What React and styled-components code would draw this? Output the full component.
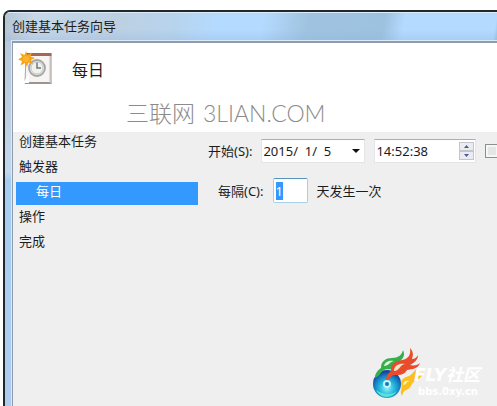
import React, { useEffect, useRef } from 'react';
import styled, { createGlobalStyle } from 'styled-components';

const GlobalStyle = createGlobalStyle`
  * {
    box-sizing: border-box;
  }

  body {
    margin: 0;
    background: #fff;
    color: #1c1c1c;
    font-family: 'Noto Sans', 'Noto Sans CJK SC', sans-serif;
    font-size: 13px;
    line-height: 18px;
    overflow: hidden;
  }
`;

const Page = styled.div`
  display: flex;
  min-height: 100vh;
  padding: 10px 0 0 3px;
`;

// The frame runs past the right and bottom edges
const Window = styled.main`
  flex: 1;
  min-width: 0;
  display: flex;
  flex-direction: column;
  border: solid #20282c;
  border-width: 2px 0 0 2px;
  border-top-left-radius: 7px;
  background: linear-gradient(180deg, #b3c6d8 0, #becfe0 100px, #c4d8ec 160px, #a5cdf2 168px, #b0cdf0 100%);
  overflow: hidden;
`;

const TitleBar = styled.header`
  height: 29px;
  padding: 4px 0 0 7px;
  border-top: 1px solid #dcebf7;
  background:
    linear-gradient(180deg, transparent 60%, rgba(140, 175, 220, 0.3)),
    linear-gradient(100deg, #b5c5d4 0, #c5d7e8 30px, #bdd0e2 110px, #b7d4ed 170px, #b4daff 210px, #b4daff 255px, #9fc3df 300px, #9dc2df 375px, #b4daff 395px, #b4daff 485px, #9dc2df 100%);
`;

const Title = styled.h1`
  margin: 0;
  font-size: 13px;
  font-weight: 400;
  line-height: 18px;
`;

const Client = styled.div`
  flex: 1;
  display: flex;
  flex-direction: column;
  margin-left: 7px;
  border: solid #8e9cae;
  border-width: 2px 0 0 1px;
  background: #efefef;
  box-shadow: 0 0 0 1px #dbe8f5;
`;

const Banner = styled.div`
  height: 89px;
  padding: 4px 0 0 5px;
  background: #fff;
`;

const BannerTop = styled.div`
  display: flex;
  align-items: center;
  gap: 19px;
  height: 42px;
`;

const Heading = styled.h2`
  margin: 0;
  padding-top: 3px;
  font-size: 16px;
  font-weight: 400;
  line-height: 24px;
`;

const Watermark = styled.div`
  display: flex;
  gap: 8px;
  padding: 6px 0 0 108px;
  color: #8b8b8b;
  font-family: Lato, 'Noto Sans CJK SC', sans-serif;
  font-size: 23px;
  font-weight: 300;
  line-height: 36px;
  white-space: nowrap;
`;

const Content = styled.div`
  flex: 1;
  display: flex;
`;

const Steps = styled.nav`
  flex: none;
  width: 185px;
  padding-left: 3px;
`;

const StepList = styled.ul`
  display: flex;
  flex-direction: column;
  gap: 2px;
  margin: 0;
  padding: 0;
  list-style: none;
`;

const StepLink = styled.a`
  display: block;
  height: 23px;
  padding-left: ${({ $nested }) => ($nested ? '20px' : '3px')};
  background: ${({ $active }) => ($active ? '#3399ff' : 'transparent')};
  color: ${({ $active }) => ($active ? '#fff' : '#1c1c1c')};
  line-height: 18px;
  text-decoration: none;
`;

const Form = styled.form`
  flex: 1;
  min-width: 0;
  display: flex;
  flex-direction: column;
  gap: 15px;
  padding: 6px 0 0 10px;
`;

const FormRow = styled.div`
  display: flex;
  align-items: center;
  gap: 9px;
  height: 25px;
  padding-left: ${({ $indent }) => ($indent ? '10px' : '0')};
  white-space: nowrap;
`;

const Field = styled.div`
  flex: none;
  display: flex;
  align-items: center;
  width: ${({ $width }) => $width};
  height: 24px;
  padding-right: 1px;
  border: 1px solid #e3e5e8;
  border-top-color: #abadb3;
  background: #fff;
`;

const FieldInput = styled.input`
  flex: 1;
  min-width: 0;
  height: 20px;
  padding: 0 0 0 1px;
  border: 0;
  outline: 0;
  background: transparent;
  color: #1c1c1c;
  font: inherit;
`;

const DayInput = styled.input`
  width: 35px;
  height: 25px;
  padding: 0 2px;
  border: 1px solid #a9cfe8;
  border-top-color: #5794bf;
  border-radius: 2px;
  outline: 0;
  background: #fff;
  color: #1c1c1c;
  font: inherit;

  &::selection {
    background: #3399ff;
    color: #fff;
  }
`;

const DropButton = styled.button`
  display: flex;
  align-items: center;
  justify-content: center;
  width: 15px;
  height: 20px;
  padding: 0;
  border: 0;
  background: transparent;
`;

const Spinner = styled.div`
  display: flex;
  flex-direction: column;
`;

const SpinButton = styled.button`
  display: flex;
  align-items: center;
  justify-content: center;
  width: 15px;
  height: 9px;
  padding: 0;
  border: 1px solid #c3c4cc;
  background: #ebecf1;
`;

const SyncBox = styled.input`
  appearance: none;
  flex: none;
  width: 14px;
  height: 14px;
  margin: 0;
  border: 1px solid #8e8f8f;
  background: #e4e5e6;
  box-shadow: inset 0 0 0 2px #f6f6f6;
`;

const Badge = styled.div`
  position: absolute;
  right: 9px;
  bottom: 7px;
  display: flex;
  align-items: flex-end;
`;

const BadgeText = styled.div`
  display: flex;
  flex-direction: column;
  width: 74px;
  margin-left: -10px;
  color: #fff;
  font-family: 'DejaVu Sans', 'Noto Sans CJK SC', sans-serif;
  font-weight: 700;
  white-space: nowrap;
`;

const BadgeName = styled.span`
  font-size: 17px;
  font-style: italic;
  line-height: 20px;
`;

const BadgeSite = styled.span`
  padding-left: 4px;
  font-size: 10px;
  line-height: 14px;
`;

const Arrow = ({ up, width = 5, color = '#4a5c94' }) => (
  <svg width={width} height={up ? 3 : Math.ceil(width / 2)} viewBox="0 0 10 6" preserveAspectRatio="none" aria-hidden="true">
    <path d={up ? 'M0 6 5 0l5 6z' : 'M0 0h10L5 6z'} fill={color} />
  </svg>
);

const TaskIcon = () => (
  <svg width="35" height="34" viewBox="0 0 35 34" aria-hidden="true">
    <path d="M8 3h25v29.500H7z" fill="#f7f5f4" stroke="#aaa4a2" />
    <path d="M8 2h25.500v3H8z" fill="#a96751" />
    <path d="M8 31h25.500v2H7z" fill="#9b9492" />
    <path d="M31.500 5h2v27h-2z" fill="#c5bfbd" />
    <path d="m5 32 6-9v9z" fill="#fff" />
    <circle cx="19" cy="17" r="8" fill="#e1e5e7" stroke="#a5a5a5" strokeWidth="1.800" />
    <circle cx="19" cy="17" r="6" fill="#f2f2e9" stroke="#c6cacb" />
    <path d="M19 11.500V17h4" fill="none" stroke="#697989" strokeWidth="1.500" />
    <path
      d="m8 0 1.500 4L14 1.500 12.500 5.500 17 7l-4 2 2 4-4.500-1.500L9 16l-2-4-4.500 2.500L4 10 0 8.500 4 6 2 2l4.500 2z"
      fill="#f6a51b"
    />
    <circle cx="8" cy="8" r="3" fill="#ffb52b" />
  </svg>
);

const FlameDisc = () => (
  <svg width="52" height="52" viewBox="0 0 52 52" aria-hidden="true">
    <defs>
      <radialGradient id="disc" cx="50%" cy="65%" r="58%">
        <stop offset="0" stopColor="#8df1f5" />
        <stop offset="0.45" stopColor="#25b9df" />
        <stop offset="0.75" stopColor="#1683c4" />
        <stop offset="1" stopColor="#1646a0" />
      </radialGradient>
    </defs>
    <circle cx="15" cy="37" r="14" fill="url(#disc)" />
    <path d="M4 43c4 8 15 10 21 1-5 4-14 4-21-1z" fill="#59e0d8" />
    <path
      d="M3 31C3 26 6 23 9 21c0-7 5-10 11-10 6 0 10-3 11-8 3 6-1 10-5 12-2 2-2 6-6 7-4 1-6-1-9 2-3 2-3 5-8 7z"
      fill="#36ae4a"
    />
    <path d="M12 19c1-5 6-6 10-5-5 1-5 5-10 5z" fill="#e3f3dc" />
    <path
      d="M14 35c0-5 1-8 5-11-1-7 5-10 11-11 7-1 9-6 8-12 4 4 3 8 2 11 3 0 5-2 6-4 0 5-4 8-8 10 4 1 8 0 10-2-2 6-8 6-13 7-3 5-7 5-12 5-5 0-5 5-9 7z"
      fill="#e94c2b"
    />
    <path d="M22 24c0-6 6-8 11-7-6 1-5 7-11 7z" fill="#fbe2c8" />
    <path
      d="M30 49c-3-5 1-7-1-12 0-5 4-7 8-8 4-2 5-6 9-8-1 4-1 5-2 7 3 0 5-1 7-3-1 6-5 7-8 9-4 2-3 6-7 8-4 2-5 3-6 7z"
      fill="#fbbf20"
    />
    <path d="M31 38c0-4 3-5 7-4-4 0-3 4-7 4z" fill="#fff0a3" />
    <circle cx="15" cy="37" r="4" fill="#b9f5ff" />
    <circle cx="15" cy="37" r="2" fill="#1974b8" />
  </svg>
);

const steps = [
  { label: '创建基本任务' },
  { label: '触发器' },
  { label: '每日', nested: true, active: true },
  { label: '操作' },
  { label: '完成' },
];

function App() {
  const dayRef = useRef(null);

  useEffect(() => {
    dayRef.current.focus();
    dayRef.current.select();
  }, []);

  return (
    <>
      <GlobalStyle />
      <Page>
        <Window>
          <TitleBar>
            <Title>创建基本任务向导</Title>
          </TitleBar>
          <Client>
            <Banner>
              <BannerTop>
                <TaskIcon />
                <Heading>每日</Heading>
              </BannerTop>
              <Watermark>
                <span>三联网</span>
                <span>3LIAN.COM</span>
              </Watermark>
            </Banner>
            <Content>
              <Steps>
                <StepList>
                  {steps.map((step) => (
                    <li key={step.label}>
                      <StepLink href="#" $nested={step.nested} $active={step.active}>
                        {step.label}
                      </StepLink>
                    </li>
                  ))}
                </StepList>
              </Steps>
              <Form>
                <FormRow>
                  <label htmlFor="start-date">开始(S):</label>
                  <Field $width="104px">
                    <FieldInput id="start-date" defaultValue="2015/  1/  5" />
                    <DropButton type="button" aria-label="Open calendar">
                      <Arrow width={8} color="#111" />
                    </DropButton>
                  </Field>
                  <Field $width="102px">
                    <FieldInput aria-label="Start time" defaultValue="14:52:38" />
                    <Spinner>
                      <SpinButton type="button" aria-label="Later">
                        <Arrow up />
                      </SpinButton>
                      <SpinButton type="button" aria-label="Earlier">
                        <Arrow />
                      </SpinButton>
                    </Spinner>
                  </Field>
                  <SyncBox type="checkbox" aria-label="Synchronize across time zones" />
                </FormRow>
                <FormRow $indent>
                  <label htmlFor="interval">每隔(C):</label>
                  <DayInput id="interval" ref={dayRef} defaultValue="1" />
                  <span>天发生一次</span>
                </FormRow>
              </Form>
            </Content>
          </Client>
        </Window>
      </Page>
      <Badge>
        <FlameDisc />
        <BadgeText>
          <BadgeName>FLY社区</BadgeName>
          <BadgeSite>bbs.0xy.cn</BadgeSite>
        </BadgeText>
      </Badge>
    </>
  );
}

export default App;
